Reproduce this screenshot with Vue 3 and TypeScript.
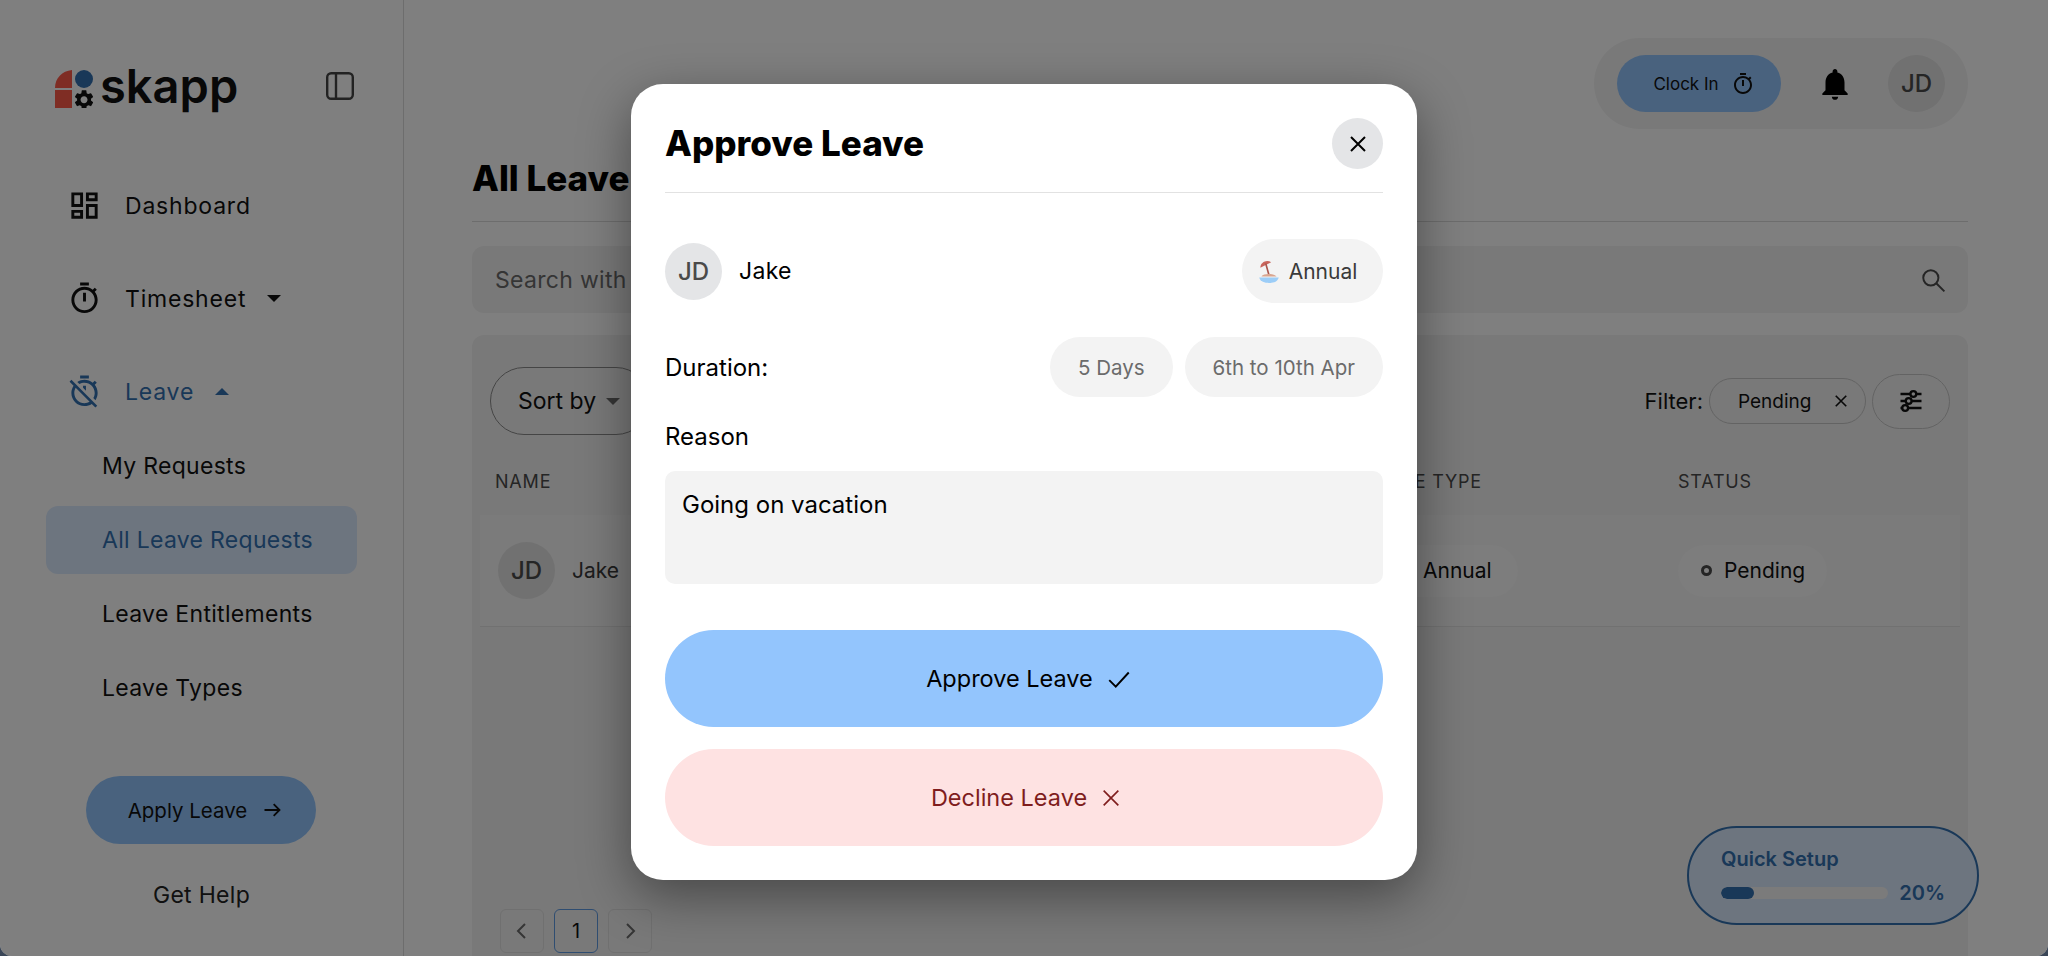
<script setup lang="ts">
const subItems: { label: string; active?: boolean }[] = [
  { label: 'My Requests' },
  { label: 'All Leave Requests', active: true },
  { label: 'Leave Entitlements' },
  { label: 'Leave Types' },
]
const timerPath =
  'M15 1H9v2h6V1zm-4 13h2V8h-2v6zm8.03-6.61l1.42-1.42c-.43-.51-.9-.99-1.41-1.41l-1.42 1.42C16.07 4.74 14.12 4 12 4c-4.97 0-9 4.03-9 9s4.02 9 9 9 9-4.03 9-9c0-2.12-.74-4.07-1.97-5.61zM12 20c-3.87 0-7-3.13-7-7s3.13-7 7-7 7 3.13 7 7-3.13 7-7 7z'
const closePath = 'M5 5l14 14M19 5L5 19'
</script>

<template>
  <div class="stage">
    <aside class="sidebar">
      <div class="brand">
        <svg class="logo" viewBox="0 0 38 38" width="38" height="38">
          <path d="M0 18C0 8 7 1 17 0v18z" fill="#ff5a48" />
          <rect x="0" y="20" width="17" height="18" fill="#ff5a48" />
          <circle cx="29" cy="9" r="9" fill="#3270b0" />
          <path
            transform="translate(17.400 18) scale(.97)"
            d="M19.14 12.94c.04-.3.06-.61.06-.94 0-.32-.02-.64-.07-.94l2.03-1.58c.18-.14.23-.41.12-.61l-1.92-3.32c-.12-.22-.37-.29-.59-.22l-2.39.96c-.5-.38-1.03-.7-1.62-.94l-.36-2.54c-.04-.24-.24-.41-.48-.41h-3.84c-.24 0-.43.17-.47.41l-.36 2.54c-.59.24-1.13.57-1.62.94l-2.39-.96c-.22-.08-.47 0-.59.22L2.74 8.87c-.12.21-.08.47.12.61l2.03 1.58c-.05.3-.09.63-.09.94s.02.64.07.94l-2.03 1.58c-.18.14-.23.41-.12.61l1.92 3.32c.12.22.37.29.59.22l2.39-.96c.5.38 1.03.7 1.62.94l.36 2.54c.05.24.24.41.48.41h3.84c.24 0 .44-.17.47-.41l.36-2.54c.59-.24 1.13-.56 1.62-.94l2.39.96c.22.08.47 0 .59-.22l1.92-3.32c.12-.22.07-.47-.12-.61l-2.01-1.58zM12 15.6c-1.98 0-3.6-1.62-3.6-3.6s1.62-3.6 3.6-3.6 3.6 1.62 3.6 3.6-1.62 3.6-3.6 3.6z"
            fill="#111"
          />
        </svg>
        <span class="wordmark">skapp</span>
        <svg class="toggle" viewBox="0 0 28 28" width="28" height="28" fill="none" stroke="#444" stroke-width="2.400">
          <rect x="1.200" y="1.200" width="25.600" height="25.600" rx="4" />
          <path d="M10 1.200v25.600" />
        </svg>
      </div>

      <nav class="nav">
        <div class="nav-item">
          <svg class="nav-icon" viewBox="0 0 24 24" fill="#111">
            <path d="M19 5v2h-4V5h4M9 5v6H5V5h4m10 8v6h-4v-6h4M9 17v2H5v-2h4M21 3h-8v6h8V3zM11 3H3v10h8V3zm10 8h-8v10h8V11zm-10 4H3v6h8v-6z" />
          </svg>
          <span>Dashboard</span>
        </div>
        <div class="nav-item">
          <svg class="nav-icon" viewBox="0 0 24 24" fill="#111"><path :d="timerPath" /></svg>
          <span>Timesheet</span>
          <span class="caret down"></span>
        </div>
        <div class="nav-item current">
          <svg class="nav-icon" viewBox="0 0 24 24" fill="currentColor">
            <path d="M19.04 4.55l-1.42 1.42C16.07 4.74 14.12 4 12 4c-1.83 0-3.53.55-4.95 1.48l1.46 1.46C9.53 6.35 10.73 6 12 6c3.87 0 7 3.13 7 7 0 1.27-.35 2.47-.94 3.49l1.45 1.45C20.45 16.53 21 14.83 21 13c0-2.12-.74-4.07-1.97-5.61l1.42-1.42-1.41-1.42zM15 1H9v2h6V1zm-4 8.44l2 2V8h-2v1.44zM3.02 4L1.75 5.27 4.5 8.03C3.55 9.45 3 11.16 3 13c0 4.97 4.03 9 9 9 1.84 0 3.55-.55 4.98-1.5l2.5 2.5 1.27-1.27-7.71-7.71L3.02 4zM12 20c-3.87 0-7-3.13-7-7 0-1.28.35-2.48.95-3.52l9.56 9.56c-1.03.61-2.23.96-3.51.96z" />
          </svg>
          <span>Leave</span>
          <span class="caret up"></span>
        </div>
        <ul class="sub">
          <li v-for="item in subItems" :key="item.label" :class="{ active: item.active }">{{ item.label }}</li>
        </ul>
      </nav>

      <div class="apply">
        <span>Apply Leave</span>
        <svg viewBox="0 0 24 24" width="20" height="20" fill="none" stroke="#111" stroke-width="2.200">
          <path d="M3 12h18M14 5l7 7-7 7" />
        </svg>
      </div>
      <div class="help">Get Help</div>
    </aside>

    <main class="main">
      <div class="topbar">
        <div class="top-pill">
          <div class="clock">
            <span>Clock In</span>
            <svg viewBox="0 0 24 24" width="24" height="24" fill="#111"><path :d="timerPath" /></svg>
          </div>
          <svg class="bell" viewBox="0 0 24 24" width="38" height="38" fill="#000">
            <path d="M12 22c1.1 0 2-.9 2-2h-4c0 1.1.89 2 2 2zm6-6v-5c0-3.07-1.64-5.64-4.5-6.32V4c0-.83-.67-1.5-1.5-1.5s-1.5.67-1.5 1.5v.68C7.63 5.36 6 7.92 6 11v5l-2 2v1h16v-1l-2-2z" />
          </svg>
          <div class="avatar dim">JD</div>
        </div>
      </div>

      <h1 class="title">All Leave</h1>

      <div class="search">
        <span>Search with</span>
        <svg viewBox="0 0 24 24" width="26" height="26" fill="none" stroke="#4a4a4a" stroke-width="1.800">
          <circle cx="10" cy="10" r="7" />
          <path d="M15 15l7.500 7.500" />
        </svg>
      </div>

      <section class="card">
        <div class="toolbar">
          <div class="sort">
            <span>Sort by</span>
            <span class="caret down grey"></span>
          </div>
          <div class="filters">
            <span class="filter-label">Filter:</span>
            <div class="filter-chip">
              <span>Pending</span>
              <svg viewBox="0 0 24 24" width="18" height="18" fill="none" stroke="#111" stroke-width="2.200"><path :d="closePath" /></svg>
            </div>
            <div class="filter-btn">
              <svg viewBox="0 0 24 24" width="28" height="28" fill="none" stroke="#111" stroke-width="2">
                <path d="M3 6h18M3 12h18M3 18h18" />
                <circle cx="14" cy="6" r="2.500" fill="#f3f3f3" />
                <circle cx="10" cy="12" r="2.500" fill="#f3f3f3" />
                <circle cx="7" cy="18" r="2.500" fill="#f3f3f3" />
              </svg>
            </div>
          </div>
        </div>

        <div class="thead">
          <span>NAME</span>
          <span>LEAVE TYPE</span>
          <span>STATUS</span>
        </div>

        <div class="trow">
          <div class="person">
            <div class="avatar dim">JD</div>
            <span class="person-name">Jake</span>
          </div>
          <div class="tag">Annual</div>
          <div class="tag status"><i class="ring"></i>Pending</div>
        </div>

        <div class="pager">
          <span class="page-btn">
            <svg viewBox="0 0 24 24" width="24" height="24" fill="none" stroke="#6b6b6b" stroke-width="2"><path d="M15 5l-7 7 7 7" /></svg>
          </span>
          <span class="page-btn current-page">1</span>
          <span class="page-btn">
            <svg viewBox="0 0 24 24" width="24" height="24" fill="none" stroke="#6b6b6b" stroke-width="2"><path d="M9 5l7 7-7 7" /></svg>
          </span>
        </div>
      </section>
    </main>

    <div class="quick">
      <div class="quick-title">Quick Setup</div>
      <div class="quick-line">
        <div class="track"><div class="fill" :style="{ width: '20%' }"></div></div>
        <span class="pct">20%</span>
      </div>
    </div>

    <div class="overlay">
      <div class="modal">
        <header class="modal-head">
          <h2>Approve Leave</h2>
          <div class="close">
            <svg viewBox="0 0 24 24" width="24" height="24" fill="none" stroke="#000" stroke-width="2"><path :d="closePath" /></svg>
          </div>
        </header>

        <div class="who">
          <div class="person">
            <div class="avatar light">JD</div>
            <span class="who-name">Jake</span>
          </div>
          <div class="chip tall">
            <svg viewBox="0 0 24 24" width="26" height="26">
              <path d="M4 9C4 4 10 1 14 4z" fill="#c9655c" />
              <path d="M9 5l3 11" stroke="#a8554c" stroke-width="1.500" />
              <path d="M5 17c2-3 11-3 14 0z" fill="#d9a58f" />
              <path d="M3 18h18c-1 4-5 5-9 5s-8-1-9-5z" fill="#9ccdf7" />
            </svg>
            <span>Annual</span>
          </div>
        </div>

        <div class="duration">
          <span class="label">Duration:</span>
          <div class="chips">
            <div class="chip muted">5 Days</div>
            <div class="chip muted">6th to 10th Apr</div>
          </div>
        </div>

        <div class="reason-label label">Reason</div>
        <div class="reason">Going on vacation</div>

        <div class="action approve">
          <span>Approve Leave</span>
          <svg viewBox="0 0 24 24" width="26" height="26" fill="none" stroke="#000" stroke-width="1.800"><path d="M3 13l6 6L21 6" /></svg>
        </div>
        <div class="action decline">
          <span>Decline Leave</span>
          <svg viewBox="0 0 24 24" width="22" height="22" fill="none" stroke="#7f1d1d" stroke-width="1.800"><path d="M4 4l16 16M20 4L4 20" /></svg>
        </div>
      </div>
    </div>
  </div>
</template>

<style>
html,
body {
  margin: 0;
  background: #3a4657;
}
</style>

<style scoped>
* {
  box-sizing: border-box;
}
.stage {
  position: relative;
  width: 2048px;
  height: 956px;
  display: flex;
  overflow: hidden;
  background: #fff;
  border-radius: 0 0 12px 12px;
  font-family: Inter, 'Liberation Sans', sans-serif;
  color: #111;
}
.sidebar {
  width: 404px;
  flex: none;
  border-right: 1px solid #dadada;
  padding-top: 63px;
  display: flex;
  flex-direction: column;
}
.brand {
  height: 45px;
  display: flex;
  align-items: center;
  padding-left: 55px;
}
.logo {
  flex: none;
  margin-top: 7px;
}
.wordmark {
  margin-left: 7px;
  font-size: 47px;
  font-weight: 600;
  line-height: 45px;
}
.toggle {
  margin-left: auto;
  margin-right: 49px;
}
.nav {
  margin-top: 67px;
  display: flex;
  flex-direction: column;
}
.nav-item {
  height: 61px;
  margin-bottom: 32px;
  padding-left: 67px;
  display: flex;
  align-items: center;
  gap: 23px;
  font-size: 23px;
  letter-spacing: 0.8px;
}
.nav-item.current {
  color: #3270b0;
  margin-bottom: 10px;
}
.nav-icon {
  width: 35px;
  height: 35px;
  flex: none;
}
.caret {
  width: 0;
  height: 0;
  margin-left: -2px;
  border-left: 7px solid transparent;
  border-right: 7px solid transparent;
}
.caret.down {
  border-top: 7px solid #111;
}
.caret.up {
  border-bottom: 7px solid #3270b0;
}
.caret.grey {
  border-top-color: #6b6b6b;
  margin-left: 10px;
}
.sub {
  list-style: none;
  margin: 0;
  padding: 0 0 0 46px;
  display: flex;
  flex-direction: column;
  gap: 6px;
}
.sub li {
  width: 311px;
  height: 68px;
  padding-left: 56px;
  border-radius: 12px;
  display: flex;
  align-items: center;
  font-size: 23px;
  letter-spacing: 0.3px;
}
.sub li.active {
  background: #dbeafe;
  color: #3270b0;
}
.apply {
  margin: 54px 0 0 86px;
  width: 230px;
  height: 68px;
  border-radius: 34px;
  background: #93c5fd;
  padding-left: 8px;
  display: flex;
  align-items: center;
  justify-content: center;
  gap: 15px;
  font-size: 20.500px;
}
.help {
  margin-top: 37px;
  width: 403px;
  text-align: center;
  font-size: 23px;
  letter-spacing: 0.3px;
  color: #222;
}
.main {
  flex: 1;
  min-width: 0;
  padding: 38px 80px 0 68px;
  display: flex;
  flex-direction: column;
}
.topbar {
  display: flex;
  justify-content: flex-end;
}
.top-pill {
  height: 91px;
  width: 374px;
  border-radius: 46px;
  background: #f3f3f3;
  padding: 0 23px;
  display: flex;
  align-items: center;
  justify-content: space-between;
}
.clock {
  width: 164px;
  height: 57px;
  border-radius: 29px;
  background: #93c5fd;
  padding-left: 10px;
  display: flex;
  align-items: center;
  justify-content: center;
  gap: 12px;
  font-size: 17px;
}
.bell {
  flex: none;
}
.avatar {
  width: 57px;
  height: 57px;
  border-radius: 50%;
  flex: none;
  display: flex;
  align-items: center;
  justify-content: center;
  font-size: 24px;
  font-weight: 500;
  color: #4a4a4a;
}
.avatar.dim {
  background: #e2e2e2;
}
.avatar.light {
  background: #e4e5e7;
}
.title {
  margin: 25px 0 0;
  height: 68px;
  line-height: 48px;
  border-bottom: 1px solid #dadada;
  font-size: 35px;
  font-weight: 800;
  color: #000;
}
.search {
  margin-top: 24px;
  height: 67px;
  flex: none;
  border-radius: 12px;
  background: #f3f3f3;
  padding: 0 22px 0 23px;
  display: flex;
  align-items: center;
  justify-content: space-between;
  font-size: 23px;
  letter-spacing: 0.3px;
  color: #6b6b6b;
}
.card {
  margin-top: 22px;
  flex: 1;
  min-height: 0;
  border-radius: 12px 12px 0 0;
  background: #f3f3f3;
  display: flex;
  flex-direction: column;
}
.toolbar {
  height: 100px;
  padding: 32px 18px 0;
  display: flex;
  justify-content: space-between;
  align-items: flex-start;
}
.sort {
  width: 160px;
  height: 68px;
  border-radius: 34px;
  border: 1px solid #8a8a8a;
  display: flex;
  align-items: center;
  padding-left: 27px;
  font-size: 23px;
}
.filters {
  display: flex;
  align-items: center;
  height: 68px;
  gap: 6px;
}
.filter-label {
  font-size: 22px;
}
.filter-chip {
  width: 157px;
  height: 46px;
  border-radius: 23px;
  border: 1px solid #c6c6c6;
  display: flex;
  align-items: center;
  justify-content: space-between;
  padding: 0 15px 0 28px;
  font-size: 19px;
}
.filter-btn {
  width: 78px;
  height: 55px;
  border-radius: 28px;
  border: 1px solid #c6c6c6;
  display: flex;
  align-items: center;
  justify-content: center;
}
.thead {
  height: 80px;
  padding: 12px 0 0 23px;
  display: grid;
  grid-template-columns: 872px 311px 1fr;
  align-items: center;
  font-size: 18px;
  letter-spacing: 0.8px;
  color: #4a4a4a;
}
.trow {
  height: 112px;
  flex: none;
  margin: 0 8px;
  padding-left: 18px;
  display: grid;
  grid-template-columns: 869px 311px 1fr;
  align-items: center;
  background: #f6f6f6;
  border-bottom: 1px solid #e2e2e2;
}
.person {
  display: flex;
  align-items: center;
  gap: 17px;
}
.person-name {
  font-size: 21px;
  color: #3a3a3a;
}
.tag {
  width: 151px;
  height: 52px;
  border-radius: 26px;
  background: #fafafa;
  display: flex;
  align-items: center;
  padding-left: 56px;
  font-size: 21px;
}
.tag.status {
  width: 149px;
  padding-left: 23px;
  gap: 12px;
}
.ring {
  width: 11px;
  height: 11px;
  border-radius: 50%;
  border: 3px solid #4a4a4a;
}
.pager {
  margin-top: auto;
  margin-bottom: 3px;
  padding-left: 28px;
  display: flex;
  gap: 10px;
}
.page-btn {
  width: 44px;
  height: 44px;
  border-radius: 6px;
  border: 1px solid #e0e0e0;
  display: flex;
  align-items: center;
  justify-content: center;
  font-size: 20px;
}
.current-page {
  border-color: #5f9be3;
}
.quick {
  position: absolute;
  left: 1687px;
  top: 826px;
  width: 292px;
  height: 99px;
  border-radius: 50px;
  border: 2px solid #3270b0;
  background: #dbeafe;
  padding: 17px 32px 0 32px;
  color: #3270b0;
}
.quick-title {
  font-size: 20px;
  font-weight: 600;
  line-height: 28px;
}
.quick-line {
  margin-top: 8px;
  display: flex;
  align-items: center;
  justify-content: space-between;
}
.track {
  width: 167px;
  height: 12px;
  border-radius: 6px;
  background: #f6f6f6;
  overflow: hidden;
}
.fill {
  height: 100%;
  border-radius: 6px;
  background: #3270b0;
}
.pct {
  font-size: 20px;
  font-weight: 600;
}
.overlay {
  position: absolute;
  inset: 0;
  background: rgba(0, 0, 0, 0.5);
  display: flex;
  align-items: flex-start;
  justify-content: center;
  padding-top: 84px;
}
.modal {
  width: 786px;
  height: 796px;
  border-radius: 32px;
  background: #fff;
  padding: 34px 34px 0;
  box-shadow: 0 16px 52px rgba(0, 0, 0, 0.42);
  display: flex;
  flex-direction: column;
}
.modal-head {
  height: 75px;
  flex: none;
  border-bottom: 1px solid #e2e2e2;
  display: flex;
  justify-content: space-between;
  align-items: flex-start;
}
.modal-head h2 {
  margin: 0;
  line-height: 51px;
  font-size: 35px;
  font-weight: 800;
  color: #000;
}
.close {
  width: 51px;
  height: 51px;
  border-radius: 50%;
  background: #e4e5e7;
  display: flex;
  align-items: center;
  justify-content: center;
}
.who {
  margin-top: 46px;
  height: 64px;
  flex: none;
  display: flex;
  align-items: center;
  justify-content: space-between;
}
.who-name {
  font-size: 23px;
  letter-spacing: 0.3px;
  color: #000;
}
.chip {
  height: 60px;
  border-radius: 30px;
  background: #f3f3f3;
  display: flex;
  align-items: center;
  padding: 0 28px;
  font-size: 20.500px;
  color: #3a3a3a;
}
.chip.tall {
  height: 64px;
  border-radius: 32px;
  width: 141px;
  padding: 0 24px 0 12px;
  gap: 7px;
  justify-content: center;
  font-size: 21px;
}
.chip.muted {
  color: #6b6b6b;
}
.duration {
  margin-top: 34px;
  height: 60px;
  flex: none;
  display: flex;
  align-items: center;
  justify-content: space-between;
}
.chips {
  display: flex;
  gap: 12px;
}
.label {
  color: #000;
  font-size: 24px;
}
.reason-label {
  margin-top: 24px;
  line-height: 32px;
}
.reason {
  margin-top: 18px;
  height: 113px;
  flex: none;
  border-radius: 10px;
  background: #f3f3f3;
  padding: 18px 17px 0;
  font-size: 24px;
  line-height: 32px;
  color: #000;
}
.action {
  height: 97px;
  flex: none;
  border-radius: 49px;
  display: flex;
  align-items: center;
  justify-content: center;
  gap: 13px;
  font-size: 23.500px;
}
.approve {
  margin-top: 46px;
  padding-left: 10px;
  background: #93c5fd;
  color: #000;
}
.decline {
  margin-top: 22px;
  padding-left: 5px;
  background: #fee2e2;
  color: #7f1d1d;
}
</style>
